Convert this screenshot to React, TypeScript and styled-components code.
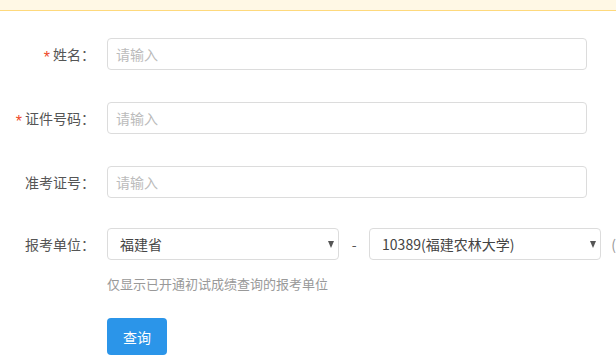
import React, { useState } from 'react';
import styled, { createGlobalStyle } from 'styled-components';

const GlobalStyle = createGlobalStyle`
  html, body {
    margin: 0;
    padding: 0;
    background: #fff;
    overflow: hidden;
  }
  body {
    font-family: "Noto Sans CJK SC", "Liberation Sans", sans-serif;
    font-size: 14px;
    color: #555;
  }
`;

const Page = styled.div`
  width: 616px;
  height: 363px;
  overflow: hidden;
`;

const NoticeBar = styled.div`
  height: 10px;
  background: #fff8e5;
  border-bottom: 1px solid #fed97c;
`;

const Form = styled.form`
  padding-top: 27px;
`;

const FormItem = styled.div<{ $gap?: number }>`
  display: flex;
  align-items: center;
  height: 32px;
  margin-bottom: ${({ $gap }) => $gap ?? 32}px;
  white-space: nowrap;
`;

const Label = styled.label`
  flex: 0 0 95px;
  margin-right: 12px;
  text-align: right;
  font-size: 14px;
  line-height: 32px;
  color: #555;
`;

const Required = styled.span`
  display: inline-block;
  color: #ee4a29;
  margin-right: 3px;
  font-family: "Liberation Sans", sans-serif;
  font-size: 16px;
  transform: translateY(3px);
`;

const TextInput = styled.input`
  box-sizing: border-box;
  width: 480px;
  height: 32px;
  padding: 0 8px;
  border: 1px solid #dcdcdc;
  border-radius: 4px;
  font-family: inherit;
  font-size: 14px;
  color: #555;
  outline: none;

  &::placeholder {
    color: #bbb;
  }
`;

const SelectWrap = styled.div`
  position: relative;
  width: 233px;
  height: 32px;
`;

const Select = styled.select`
  box-sizing: border-box;
  width: 100%;
  height: 32px;
  padding: 0 24px 0 12px;
  border: 1px solid #dcdcdc;
  border-radius: 4px;
  background: #fff;
  font-family: inherit;
  font-size: 14px;
  color: #444;
  appearance: none;
  outline: none;
`;

const Caret = styled.span`
  position: absolute;
  right: 5px;
  top: 13px;
  width: 0;
  height: 0;
  border-left: 3.5px solid transparent;
  border-right: 3.5px solid transparent;
  border-top: 7px solid #555;
  pointer-events: none;
`;

const Dash = styled.span`
  width: 30px;
  text-align: center;
  color: #555;
`;

const Extra = styled.span`
  margin-left: 10px;
  color: #999;
`;

const Hint = styled.div`
  padding-left: 107px;
  font-size: 13px;
  line-height: 18px;
  color: #999;
  margin-bottom: 25px;
`;

const Actions = styled.div`
  padding-left: 107px;
`;

const SubmitButton = styled.button`
  width: 60px;
  height: 37px;
  border: none;
  border-radius: 4px;
  background: #2b95e9;
  color: #fff;
  font-family: inherit;
  font-size: 14px;
  cursor: pointer;
`;

const Dropdown: React.FC<{ value: string; options: string[]; onChange: (v: string) => void }> = ({
  value,
  options,
  onChange
}) => (
  <SelectWrap>
    <Select value={value} onChange={(e) => onChange(e.target.value)}>
      {options.map((o) => (
        <option key={o} value={o}>{o}</option>
      ))}
    </Select>
    <Caret />
  </SelectWrap>
);

export default function App() {
  const [province, setProvince] = useState('福建省');
  const [school, setSchool] = useState('10389(福建农林大学)');

  return (
    <Page>
      <GlobalStyle />
      <NoticeBar />
      <Form onSubmit={(e) => e.preventDefault()}>
        <FormItem>
          <Label><Required>*</Required>姓名：</Label>
          <TextInput placeholder="请输入" />
        </FormItem>
        <FormItem>
          <Label><Required>*</Required>证件号码：</Label>
          <TextInput placeholder="请输入" />
        </FormItem>
        <FormItem $gap={30}>
          <Label>准考证号：</Label>
          <TextInput placeholder="请输入" />
        </FormItem>
        <FormItem $gap={15}>
          <Label>报考单位：</Label>
          <Dropdown value={province} options={['福建省']} onChange={setProvince} />
          <Dash>-</Dash>
          <Dropdown value={school} options={['10389(福建农林大学)']} onChange={setSchool} />
          <Extra>(</Extra>
        </FormItem>
        <Hint>仅显示已开通初试成绩查询的报考单位</Hint>
        <Actions>
          <SubmitButton type="submit">查询</SubmitButton>
        </Actions>
      </Form>
    </Page>
  );
}
